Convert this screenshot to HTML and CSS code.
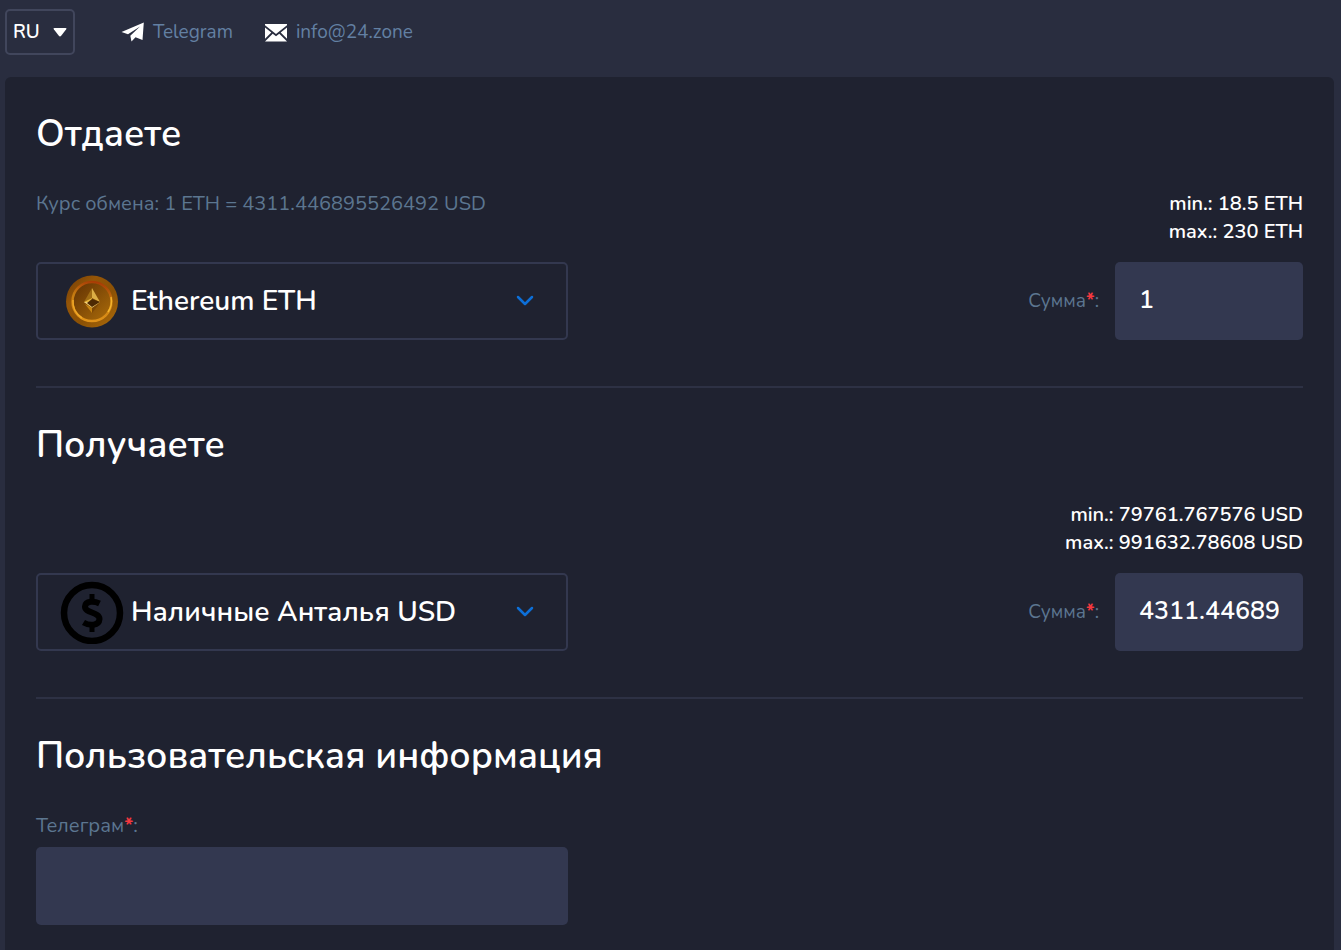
FILE: index.html
```html
<!DOCTYPE html>
<html lang="ru">
<head>
    <meta charset="UTF-8">
    <meta name="viewport" content="width=device-width, initial-scale=1.0">
    <title>24.zone</title>
    <link rel="stylesheet" href="styles.css">
</head>
<body>
    <header class="topbar">
        <div class="lang">
            <select class="lang-select" aria-label="Язык">
                <option>RU</option>
                <option>EN</option>
            </select>
            <svg class="lang-arrow" viewBox="0 0 14 9" aria-hidden="true"><path d="M1.5 0h11q1.600 0 .7 1.300L8.200 7.800q-1.200 1.400-2.400 0L.8 1.300Q-.1 0 1.500 0z" fill="#fff"/></svg>
        </div>
        <a class="contact" href="#telegram">
            <svg class="contact-icon" viewBox="0 0 24 22" aria-hidden="true"><path d="M.5 11 22.800 1.500 21.500 19 14.500 16.300 10.500 20.500 9.300 14.800 19 5.500 7 13.200z" fill="#fff"/></svg>
            Telegram
        </a>
        <a class="contact" href="mailto:info@24.zone">
            <svg class="contact-icon" viewBox="0 0 24 22" aria-hidden="true"><path d="M1 3h22v1.300l-11 8.700L1 4.300zM1 6.500l6.300 5L1 17.700zM23 6.500l-6.300 5 6.300 6.200zM8.700 12.700l3.300 2.600 3.300-2.600 7.700 7.800H1z" fill="#fff"/></svg>
            info@24.zone
        </a>
    </header>

    <main class="panel">
        <form>
            <section class="block">
                <h2>Отдаете</h2>
                <div class="info">
                    <p class="rate">Курс обмена: 1 ETH = 4311.446895526492 USD</p>
                    <p class="limits">min.: 18.5 ETH<br>max.: 230 ETH</p>
                </div>
                <div class="fields">
                    <div class="currency">
                        <select class="currency-select" aria-label="Отдаете">
                            <option>Ethereum ETH</option>
                        </select>
                        <svg class="currency-icon" viewBox="0 0 64 64" aria-hidden="true">
                            <defs>
                                <linearGradient id="rim" x1="0" y1="0" x2="1" y2="1">
                                    <stop offset="0" stop-color="#6f3b05"/>
                                    <stop offset=".3" stop-color="#955507"/>
                                    <stop offset=".6" stop-color="#8b5105"/>
                                    <stop offset="1" stop-color="#b06d09"/>
                                </linearGradient>
                                <linearGradient id="ring" x1=".6" y1="0" x2=".4" y2="1">
                                    <stop offset="0" stop-color="#a83c05"/>
                                    <stop offset=".4" stop-color="#c47a10"/>
                                    <stop offset="1" stop-color="#e2941a"/>
                                </linearGradient>
                                <linearGradient id="face" x1="0" y1="0" x2="1" y2="1">
                                    <stop offset="0" stop-color="#5f3003"/>
                                    <stop offset="1" stop-color="#ad6d0a"/>
                                </linearGradient>
                            </defs>
                            <circle cx="32" cy="32.500" r="26" fill="url(#rim)"/>
                            <circle cx="32" cy="32.500" r="19.500" fill="url(#face)" stroke="url(#ring)" stroke-width="2.500"/>
                            <path d="M13 31a19 19 0 0 0 9 18" fill="none" stroke="#f0a928" stroke-width="1.500"/>
                            <path d="M51 28a19 19 0 0 1-3 15" fill="none" stroke="#f5b52c" stroke-width="1.500"/>
                            <path d="M32 19v10l-8 4z" fill="#a06c14"/>
                            <path d="M32 19v10l8 4z" fill="#dcae45"/>
                            <path d="M24 33l8-4v8z" fill="#e8b83c"/>
                            <path d="M24 33h16l-8 6z" fill="#f2d077"/>
                            <path d="M32 30l8 3-8 5-5-4z" fill="#4d2903"/>
                            <path d="M25 35l7 4v5z" fill="#c98713"/>
                            <path d="M39 35l-7 4v5z" fill="#7c4706"/>
                        </svg>
                        <svg class="currency-arrow" viewBox="0 0 18 12" aria-hidden="true"><path d="M2 2l7 7 7-7" fill="none" stroke="#0d6fd8" stroke-width="2.500" stroke-linecap="round" stroke-linejoin="round"/></svg>
                    </div>
                    <div class="amount">
                        <label for="give">Сумма<span class="required">*</span>:</label>
                        <input type="text" id="give" name="give" value="1">
                    </div>
                </div>
            </section>

            <section class="block">
                <h2>Получаете</h2>
                <div class="info">
                    <p class="limits">min.: 79761.767576 USD<br>max.: 991632.78608 USD</p>
                </div>
                <div class="fields">
                    <div class="currency">
                        <select class="currency-select" aria-label="Получаете">
                            <option>Наличные Анталья USD</option>
                        </select>
                        <svg class="currency-icon" viewBox="0 0 64 64" aria-hidden="true">
                            <circle cx="32" cy="33" r="28" fill="none" stroke="#000" stroke-width="6.500"/>
                            <path d="M32 14v6M32 46v6" fill="none" stroke="#000" stroke-width="5"/>
                            <path d="M39.500 23.500c-5-2.500-14-3-14.500 3-.5 6.500 14.500 5.500 14.500 12.500-.5 7-10 7-16 3.500" fill="none" stroke="#000" stroke-width="6"/>
                        </svg>
                        <svg class="currency-arrow" viewBox="0 0 18 12" aria-hidden="true"><path d="M2 2l7 7 7-7" fill="none" stroke="#0d6fd8" stroke-width="2.500" stroke-linecap="round" stroke-linejoin="round"/></svg>
                    </div>
                    <div class="amount">
                        <label for="get">Сумма<span class="required">*</span>:</label>
                        <input type="text" id="get" name="get" value="4311.446895526492">
                    </div>
                </div>
            </section>

            <section class="block">
                <h2>Пользовательская информация</h2>
                <div class="user-field">
                    <label for="telegram">Телеграм<span class="required">*</span>:</label>
                    <input type="text" id="telegram" name="telegram">
                </div>
            </section>
        </form>
    </main>
</body>
</html>
```

FILE: styles.css
```css
* {
    box-sizing: border-box;
}
body {
    display: flex;
    flex-direction: column;
    min-height: 100vh;
    margin: 0;
    background-color: #292d3f;
    color: #fff;
    font-family: Nunito, Lato, sans-serif;
    font-size: 20px;
    line-height: 28px;
}
h2, p {
    margin: 0;
}
select, input {
    font-family: inherit;
    color: #fff;
    border-radius: 5px;
}
select {
    appearance: none;
    background: transparent;
    border: 2px solid #33384f;
    cursor: pointer;
}

.topbar {
    display: flex;
    align-items: center;
    gap: 31px;
    padding: 9px 5px 22px;
}
.lang, .currency {
    display: grid;
    align-items: center;
}
.lang > *, .currency > * {
    grid-area: 1 / 1;
}
.lang svg, .currency svg {
    pointer-events: none;
}
.lang {
    margin-right: 15px;
}
.lang-select {
    width: 70px;
    height: 46px;
    padding: 0 6px;
    border-color: #41465c;
    font-size: 19px;
    font-weight: 600;
}
.lang-arrow {
    width: 14px;
    height: 9px;
    margin-right: 8px;
    justify-self: end;
}
.contact {
    display: flex;
    align-items: center;
    gap: 8px;
    color: #6380a3;
    font-size: 19px;
    text-decoration: none;
}
.contact-icon {
    width: 24px;
    height: 22px;
}

.panel {
    flex: 1;
    margin: 0 7px 0 5px;
    padding: 0 31px;
    background-color: #1f2230;
    border-radius: 6px 6px 0 0;
}
.block {
    padding: 31px 0 46px;
    border-bottom: 2px solid #2d3144;
}
.block:last-child {
    padding-bottom: 24px;
    border-bottom: 0;
}
h2 {
    margin-bottom: 30px;
    font-size: 37px;
    font-weight: 650;
    line-height: 52px;
}
.info {
    display: flex;
    justify-content: space-between;
    margin-bottom: 16px;
}
.rate, label {
    color: #5c7690;
}
.limits {
    margin-left: auto;
    font-weight: 600;
    text-align: right;
}
.fields {
    display: flex;
    justify-content: space-between;
}
.currency, .user-field {
    width: 42%;
}
.currency-select {
    width: 100%;
    height: 78px;
    padding: 0 60px 0 93px;
    font-size: 28px;
    font-weight: 600;
}
.currency-icon {
    width: 64px;
    height: 64px;
    margin-left: 24px;
}
.currency-arrow {
    width: 18px;
    height: 12px;
    margin-right: 34px;
    justify-self: end;
}
.amount {
    display: flex;
    align-items: center;
    gap: 16px;
}
.amount label {
    font-size: 19px;
}
input {
    width: 188px;
    height: 78px;
    padding: 0 24px 2px;
    border: 0;
    background-color: #333850;
    font-size: 25px;
    font-weight: 600;
}
.user-field {
    display: flex;
    flex-direction: column;
    gap: 7px;
}
.user-field input {
    width: 100%;
}
.required {
    color: #f5383f;
    font-weight: 700;
}
```
